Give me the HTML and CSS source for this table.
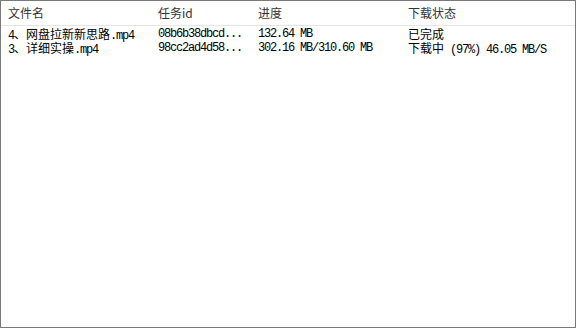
FILE: index.html
```html
<!DOCTYPE html>
<html>
<head>
<meta charset="utf-8">
<link rel="stylesheet" href="styles.css">
</head>
<body>
<div class="list">
  <div class="head">
    <div>文件名</div>
    <div>任务id</div>
    <div>进度</div>
    <div>下载状态</div>
  </div>
  <div class="rows">
    <div class="row">
      <div>4<span class="c">、网盘拉新新思路</span>.mp4</div>
      <div>08b6b38dbcd...</div>
      <div>132.64 MB</div>
      <div><span class="c">已完成</span></div>
    </div>
    <div class="row">
      <div>3<span class="c">、详细实操</span>.mp4</div>
      <div>98cc2ad4d58...</div>
      <div>302.16 MB/310.60 MB</div>
      <div><span class="c">下载中</span> (97%) 46.05 MB/S</div>
    </div>
  </div>
</div>
</body>
</html>
```

FILE: styles.css
```css
html, body {
  margin: 0;
  padding: 0;
  background: #fff;
}
.list {
  box-sizing: border-box;
  width: 576px;
  height: 328px;
  border: 1px solid #7a7a7a;
  background: #fff;
  overflow: hidden;
}
.head {
  display: grid;
  grid-template-columns: 150px 100px 150px 1fr;
  height: 24px;
  padding-left: 7px;
  border-bottom: 1px solid #e5e5e5;
  font-family: "Noto Sans CJK SC", "Microsoft YaHei", sans-serif;
  font-size: 12px;
  line-height: 24px;
  color: #333;
}
.rows {
  padding-top: 1px;
}
.row {
  display: grid;
  grid-template-columns: 150px 100px 150px 1fr;
  padding-left: 7px;
  height: 14px;
  font-family: "Liberation Mono", "Noto Sans CJK SC", monospace;
  font-size: 12px;
  letter-spacing: -1.2px;
  line-height: 14px;
  color: #000;
  white-space: nowrap;
}
.c {
  font-family: "Noto Sans CJK SC", sans-serif;
  letter-spacing: 0;
}
```
